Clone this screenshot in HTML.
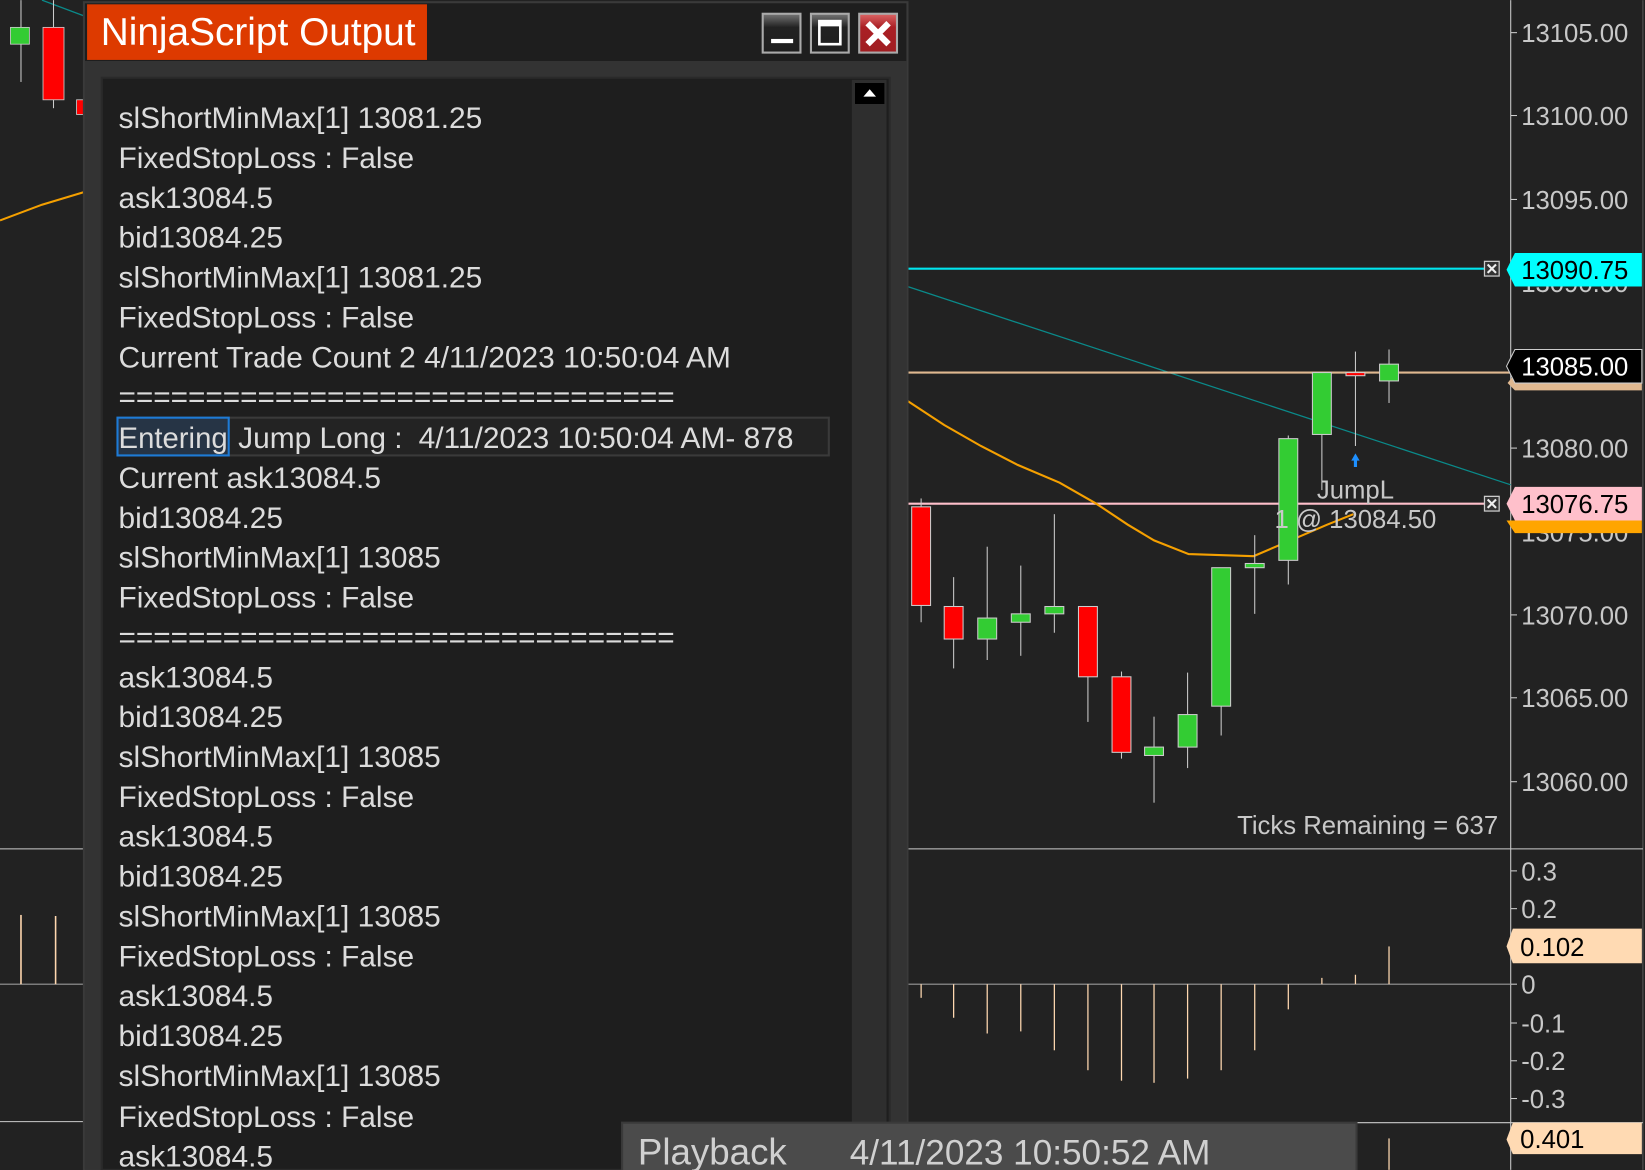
<!DOCTYPE html>
<html><head><meta charset="utf-8"><style>
html,body{margin:0;padding:0;background:#222;width:1645px;height:1170px;overflow:hidden}
svg{display:block}
text{font-family:"Liberation Sans",sans-serif}
.o{fill:#dcdcdc;font-size:28.5px;letter-spacing:0px}
.ax{fill:#c8c8c8;font-size:24.5px;letter-spacing:0px}
</style></head><body>
<svg width="1645" height="1170" viewBox="0 0 1568 1115" xmlns="http://www.w3.org/2000/svg">
<rect width="1568" height="1115" fill="#222"/>
<line x1="40" y1="0" x2="80" y2="15" stroke="#0a8a8a" stroke-width="1.2"/>
<polyline points="0,210 40,195 80,183" fill="none" stroke="#f5a000" stroke-width="2"/>
<line x1="20" y1="0" x2="20" y2="78" stroke="#ccc" stroke-width="1"/>
<rect x="10" y="26" width="18" height="16" fill="#33cc33" stroke="#ccc" stroke-width="0.8"/>
<line x1="51" y1="0" x2="51" y2="103" stroke="#ccc" stroke-width="1"/>
<rect x="41" y="26" width="20" height="69" fill="#f00" stroke="#ccc" stroke-width="0.8"/>
<rect x="73" y="95" width="8" height="14" fill="#f00" stroke="#ccc" stroke-width="0.8"/>
<line x1="0" y1="809" x2="80" y2="809" stroke="#ccc" stroke-width="1"/>
<line x1="0" y1="938" x2="80" y2="938" stroke="#999" stroke-width="1"/>
<line x1="20" y1="872" x2="20" y2="938" stroke="#ffd8b0" stroke-width="1.5"/>
<line x1="53" y1="873" x2="53" y2="938" stroke="#ffd8b0" stroke-width="1.5"/>
<line x1="0" y1="1069" x2="80" y2="1069" stroke="#ccc" stroke-width="1"/>

<line x1="1440" y1="0" x2="1440" y2="1115" stroke="#ccc" stroke-width="1"/>
<line x1="1566" y1="0" x2="1566" y2="1115" stroke="#555" stroke-width="1"/>
<line x1="865" y1="256" x2="1420" y2="256" stroke="#00e5ee" stroke-width="2"/>
<line x1="865" y1="273" x2="1440" y2="462" stroke="#0a8a8a" stroke-width="1.2"/>
<line x1="865" y1="355" x2="1440" y2="355" stroke="#e0b890" stroke-width="2"/>
<line x1="865" y1="480" x2="1420" y2="480" stroke="#ffc0cb" stroke-width="2"/>
<polyline points="865,382 900,405 935,425 970,443 1010,460 1045,480 1075,500 1100,515 1133,528 1195,530 1230,515 1265,500 1290,490" fill="none" stroke="#f5a000" stroke-width="2"/>
<g stroke="#ccc" stroke-width="1">
<line x1="878" y1="475" x2="878" y2="593"/><line x1="909" y1="550" x2="909" y2="637"/>
<line x1="941" y1="521" x2="941" y2="629"/><line x1="973" y1="539" x2="973" y2="625"/>
<line x1="1005" y1="490" x2="1005" y2="603"/><line x1="1037" y1="578" x2="1037" y2="688"/>
<line x1="1069" y1="640" x2="1069" y2="723"/><line x1="1100" y1="683" x2="1100" y2="765"/>
<line x1="1132" y1="641" x2="1132" y2="732"/><line x1="1164" y1="541" x2="1164" y2="701"/>
<line x1="1196" y1="510" x2="1196" y2="585"/><line x1="1228" y1="415" x2="1228" y2="557"/>
<line x1="1260" y1="355" x2="1260" y2="467"/><line x1="1292" y1="335" x2="1292" y2="425"/>
<line x1="1324" y1="333" x2="1324" y2="384"/>
</g>
<g stroke="#ccc" stroke-width="1">
<rect x="869" y="483" width="18" height="94" fill="#f00"/>
<rect x="900" y="578" width="18" height="31" fill="#f00"/>
<rect x="932" y="589" width="18" height="20" fill="#33cc33"/>
<rect x="964" y="585" width="18" height="8" fill="#33cc33"/>
<rect x="996" y="578" width="18" height="7" fill="#33cc33"/>
<rect x="1028" y="578" width="18" height="67" fill="#f00"/>
<rect x="1060" y="645" width="18" height="72" fill="#f00"/>
<rect x="1091" y="712" width="18" height="8" fill="#33cc33"/>
<rect x="1123" y="681" width="18" height="31" fill="#33cc33"/>
<rect x="1155" y="541" width="18" height="132" fill="#33cc33"/>
<rect x="1187" y="537" width="18" height="4" fill="#33cc33"/>
<rect x="1219" y="418" width="18" height="116" fill="#33cc33"/>
<rect x="1251" y="355" width="18" height="59" fill="#33cc33"/>
<rect x="1283" y="355" width="18" height="3" fill="#f00"/>
<rect x="1315" y="347" width="18" height="16" fill="#33cc33"/>
</g>
<path d="M1292 432 L1288 439 L1290.5 439 L1290.5 445 L1293.5 445 L1293.5 439 L1296 439 Z" fill="#1e90ff"/>
<text x="1292" y="475" class="ax" text-anchor="middle">JumpL</text>
<text x="1292" y="503" class="ax" text-anchor="middle">1 @ 13084.50</text>
<text x="1428" y="795" class="ax" text-anchor="end" font-size="27">Ticks Remaining = 637</text>
<line x1="865" y1="809" x2="1566" y2="809" stroke="#ccc" stroke-width="1"/>
<g class="ax">
<text x="1450" y="40">13105.00</text><text x="1450" y="119">13100.00</text>
<text x="1450" y="199">13095.00</text><text x="1450" y="278">13090.00</text>
<text x="1450" y="436">13080.00</text><text x="1450" y="516">13075.00</text>
<text x="1450" y="595">13070.00</text><text x="1450" y="674">13065.00</text>
<text x="1450" y="754">13060.00</text>
<text x="1450" y="839">0.3</text><text x="1450" y="875">0.2</text>
<text x="1450" y="947">0</text><text x="1450" y="984">-0.1</text>
<text x="1450" y="1020">-0.2</text><text x="1450" y="1056">-0.3</text>
</g>
<g stroke="#ccc" stroke-width="1">
<line x1="1440" y1="31" x2="1446" y2="31"/><line x1="1440" y1="110" x2="1446" y2="110"/>
<line x1="1440" y1="190" x2="1446" y2="190"/><line x1="1440" y1="427" x2="1446" y2="427"/>
<line x1="1440" y1="586" x2="1446" y2="586"/><line x1="1440" y1="665" x2="1446" y2="665"/>
<line x1="1440" y1="745" x2="1446" y2="745"/>
<line x1="1440" y1="830" x2="1446" y2="830"/><line x1="1440" y1="866" x2="1446" y2="866"/>
<line x1="1440" y1="938" x2="1446" y2="938"/><line x1="1440" y1="975" x2="1446" y2="975"/>
<line x1="1440" y1="1011" x2="1446" y2="1011"/><line x1="1440" y1="1047" x2="1446" y2="1047"/>
</g>
<path d="M1437 365 L1444 356 L1444 333 L1565 333 L1565 372 L1444 372 Z" fill="#e0b890"/>
<path d="M1436 349 L1444 333 L1565 333 L1565 365 L1444 365 Z" fill="#000" stroke="#ccc" stroke-width="1"/>
<text x="1450" y="358" fill="#fff" font-size="24.5">13085.00</text>
<path d="M1436 257 L1444 241 L1565 241 L1565 273 L1444 273 Z" fill="#00ffff"/>
<text x="1450" y="266" fill="#000" font-size="24.5">13090.75</text>
<path d="M1436 496 L1444 496 L1565 496 L1565 508 L1444 508 Z" fill="#ffa500"/>
<path d="M1436 480 L1444 464 L1565 464 L1565 496 L1444 496 Z" fill="#ffc0cb"/>
<text x="1450" y="489" fill="#000" font-size="24.5">13076.75</text>
<g stroke="#ccc" stroke-width="1.2" fill="#333">
<rect x="1415" y="249" width="14" height="14"/><rect x="1415" y="473" width="14" height="14"/>
<path d="M1418 252 L1426 260 M1426 252 L1418 260 M1418 476 L1426 484 M1426 476 L1418 484" stroke="#eee" stroke-width="2"/>
</g>
<line x1="865" y1="938" x2="1440" y2="938" stroke="#999" stroke-width="1"/>
<g stroke="#ffd8b0" stroke-width="1.2">
<line x1="878" y1="938" x2="878" y2="951"/><line x1="909" y1="938" x2="909" y2="970"/>
<line x1="941" y1="938" x2="941" y2="985"/><line x1="973" y1="938" x2="973" y2="983"/>
<line x1="1005" y1="938" x2="1005" y2="1001"/><line x1="1037" y1="938" x2="1037" y2="1020"/>
<line x1="1069" y1="938" x2="1069" y2="1030"/><line x1="1100" y1="938" x2="1100" y2="1032"/>
<line x1="1132" y1="938" x2="1132" y2="1028"/><line x1="1164" y1="938" x2="1164" y2="1020"/>
<line x1="1196" y1="938" x2="1196" y2="1001"/><line x1="1228" y1="938" x2="1228" y2="962"/>
<line x1="1260" y1="932" x2="1260" y2="938"/><line x1="1292" y1="929" x2="1292" y2="938"/>
<line x1="1324" y1="902" x2="1324" y2="938"/><line x1="1324" y1="1085" x2="1324" y2="1115"/>
</g>
<path d="M1436 902 L1442 885 L1565 885 L1565 918 L1442 918 Z" fill="#ffdab3"/>
<text x="1449" y="911" fill="#000" font-size="24.5">0.102</text>
<line x1="865" y1="1070" x2="1566" y2="1070" stroke="#ccc" stroke-width="1"/>
<path d="M1436 1086 L1442 1070 L1565 1070 L1565 1100 L1442 1100 Z" fill="#ffdab3"/>
<text x="1449" y="1094" fill="#000" font-size="24.5">0.401</text>

<rect x="80" y="2" width="785" height="1113" fill="#1e1e1e" stroke="#3a3a3a" stroke-width="2"/>
<rect x="81" y="58" width="783" height="1057" fill="#333"/>
<rect x="97" y="74" width="751" height="1041" fill="#1e1e1e" stroke="#2a2a2a" stroke-width="2"/>
<rect x="812" y="76" width="33" height="1039" fill="#2e2e2e"/>
<rect x="815" y="79" width="28" height="20" fill="#000"/>
<path d="M823 92 L829 85 L835 92 Z" fill="#fff"/>
<rect x="83" y="4" width="324" height="53" fill="#dd3a00"/>
<text x="96" y="43" fill="#fff" font-size="37">NinjaScript Output</text>
<defs><linearGradient id="g" x1="0" y1="0" x2="0" y2="1"><stop offset="0" stop-color="#777"/><stop offset="0.35" stop-color="#222"/><stop offset="1" stop-color="#1e1e1e"/></linearGradient>
<linearGradient id="r" x1="0" y1="0" x2="0" y2="1"><stop offset="0" stop-color="#d66"/><stop offset="0.35" stop-color="#aa1f24"/><stop offset="1" stop-color="#a01e22"/></linearGradient></defs>
<rect x="727" y="13" width="36" height="37" fill="url(#g)" stroke="#aaa" stroke-width="2"/>
<rect x="735" y="37" width="21" height="4" fill="#fff"/>
<rect x="773" y="13" width="36" height="37" fill="url(#g)" stroke="#aaa" stroke-width="2"/>
<rect x="781" y="20" width="20" height="22" fill="none" stroke="#fff" stroke-width="2.5"/>
<rect x="781" y="20" width="20" height="5" fill="#fff"/>
<rect x="819" y="13" width="36" height="37" fill="url(#r)" stroke="#aaa" stroke-width="2"/>
<path d="M827 22 L847 42 M847 22 L827 42" stroke="#fff" stroke-width="6"/>

<rect x="112" y="398" width="678" height="36" fill="#232323" stroke="#3a3a3a" stroke-width="2"/>
<rect x="112" y="398" width="106" height="36" fill="#263445" stroke="#1e7bd6" stroke-width="2"/>
<g class="o">
<text x="113" y="122">slShortMinMax[1] 13081.25</text>
<text x="113" y="160">FixedStopLoss : False</text>
<text x="113" y="198">ask13084.5</text>
<text x="113" y="236">bid13084.25</text>
<text x="113" y="274">slShortMinMax[1] 13081.25</text>
<text x="113" y="312">FixedStopLoss : False</text>
<text x="113" y="350">Current Trade Count 2 4/11/2023 10:50:04 AM</text>
<text x="113" y="388" textLength="530" lengthAdjust="spacingAndGlyphs">================================</text>
<text x="113" y="427"><tspan textLength="104" lengthAdjust="spacingAndGlyphs">Entering</tspan><tspan x="227">Jump Long :</tspan><tspan x="399">4/11/2023 10:50:04 AM- 878</tspan></text>
<text x="113" y="465">Current ask13084.5</text>
<text x="113" y="503">bid13084.25</text>
<text x="113" y="541">slShortMinMax[1] 13085</text>
<text x="113" y="579">FixedStopLoss : False</text>
<text x="113" y="617" textLength="530" lengthAdjust="spacingAndGlyphs">================================</text>
<text x="113" y="655">ask13084.5</text>
<text x="113" y="693">bid13084.25</text>
<text x="113" y="731">slShortMinMax[1] 13085</text>
<text x="113" y="769">FixedStopLoss : False</text>
<text x="113" y="807">ask13084.5</text>
<text x="113" y="845">bid13084.25</text>
<text x="113" y="883">slShortMinMax[1] 13085</text>
<text x="113" y="921">FixedStopLoss : False</text>
<text x="113" y="959">ask13084.5</text>
<text x="113" y="997">bid13084.25</text>
<text x="113" y="1035">slShortMinMax[1] 13085</text>
<text x="113" y="1074">FixedStopLoss : False</text>
<text x="113" y="1112">ask13084.5</text>
</g>
<rect x="593" y="1070" width="700" height="50" fill="#4b4b4b" stroke="#3a3a3a" stroke-width="2"/>
<text x="608" y="1110" fill="#d0d0d0" font-size="35">Playback</text>
<text x="810" y="1110" fill="#d0d0d0" font-size="33.5">4/11/2023 10:50:52 AM</text>
</svg>
</body></html>
